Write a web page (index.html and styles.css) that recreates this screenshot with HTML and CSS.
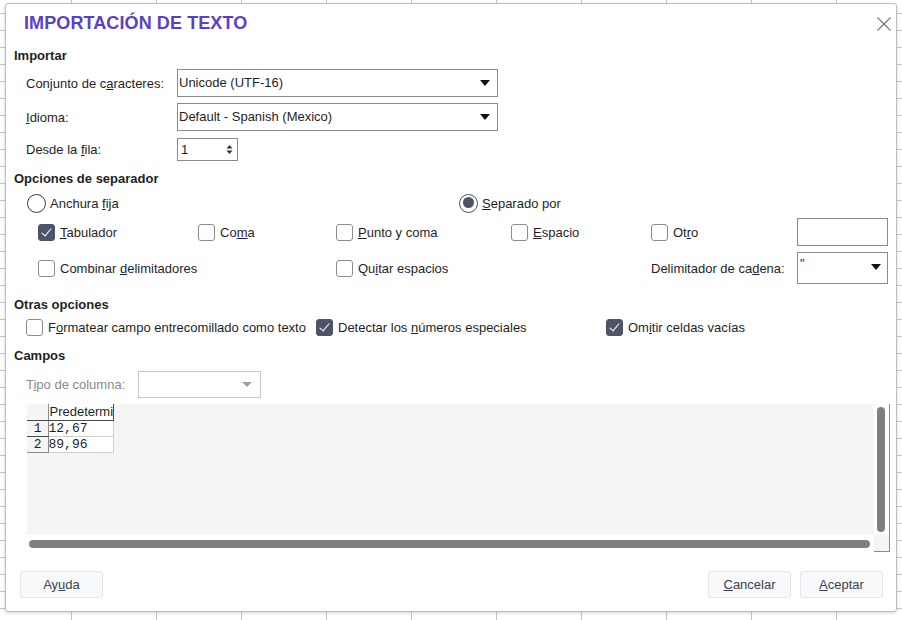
FILE: index.html
```html
<!DOCTYPE html>
<html lang="es">
<head>
<meta charset="utf-8">
<title>Importación de texto</title>
<link rel="stylesheet" href="styles.css">
</head>
<body>
<div class="dialog">
  <div class="titlebar">
    <h1 class="title">IMPORTACIÓN DE TEXTO</h1>
    <svg class="close" width="14" height="14" viewBox="0 0 14 14"><path d="M0.5 0.5 L13.5 13.5 M13.5 0.5 L0.5 13.5" stroke="#7a7a7a" stroke-width="1.2" fill="none"/></svg>
  </div>

  <div class="content">
    <div class="section h-importar">Importar</div>
    <div class="form-row r1">
      <span class="label">Conjunto de c<u>a</u>racteres:</span>
      <div class="combo wide"><span>Unicode (UTF-16)</span><i class="arrow"></i></div>
    </div>
    <div class="form-row r2">
      <span class="label"><u>I</u>dioma:</span>
      <div class="combo wide"><span>Default - Spanish (Mexico)</span><i class="arrow"></i></div>
    </div>
    <div class="form-row r3">
      <span class="label">Desde la <u>f</u>ila:</span>
      <div class="spin"><span>1</span>
        <svg class="spin-arrows" width="7" height="11" viewBox="0 0 7 11"><path d="M3.5 1 L6.5 4.5 L0.5 4.5 Z M3.5 10 L6.5 6.5 L0.5 6.5 Z" fill="#333"/></svg>
      </div>
    </div>

    <div class="section h-sep">Opciones de separador</div>
    <div class="radio-row">
      <label class="opt r-fixed"><i class="radio"></i><span>Anchura <u>f</u>ija</span></label>
      <label class="opt r-sep"><i class="radio on"></i><span><u>S</u>eparado por</span></label>
    </div>
    <div class="sep-grid">
      <label class="opt row1"><i class="check on"></i><span><u>T</u>abulador</span></label>
      <label class="opt row1"><i class="check"></i><span>Co<u>m</u>a</span></label>
      <label class="opt row1"><i class="check"></i><span><u>P</u>unto y coma</span></label>
      <label class="opt row1"><i class="check"></i><span><u>E</u>spacio</span></label>
      <label class="opt row1"><i class="check"></i><span>Ot<u>r</u>o</span></label>
      <div class="textfield"></div>

      <label class="opt row2 span2"><i class="check"></i><span>Combinar <u>d</u>elimitadores</span></label>
      <label class="opt row2"><i class="check"></i><span>Qu<u>i</u>tar espacios</span></label>
      <span class="row2 empty"></span>
      <span class="label row2">Delimitador de ca<u>d</u>ena:</span>
      <div class="combo small"><span>"</span><i class="arrow"></i></div>
    </div>

    <div class="section h-otras">Otras opciones</div>
    <div class="other-row">
      <label class="opt"><i class="check"></i><span>F<u>o</u>rmatear campo entrecomillado como texto</span></label>
      <label class="opt"><i class="check on"></i><span>Detectar los <u>n</u>úmeros especiales</span></label>
      <label class="opt"><i class="check on"></i><span>Om<u>i</u>tir celdas vacías</span></label>
    </div>

    <div class="section h-campos">Campos</div>
    <div class="form-row r-tipo">
      <span class="label muted">T<u>i</u>po de columna:</span>
      <div class="combo disabled"><span></span><i class="arrow"></i></div>
    </div>

    <div class="preview">
      <div class="preview-body">
        <table class="grid">
          <tr class="hdr"><th class="rh"></th><th class="col">Predetermi</th></tr>
          <tr class="r-a"><td class="rh">1</td><td class="cell">12,67</td></tr>
          <tr class="r-b"><td class="rh">2</td><td class="cell">89,96</td></tr>
        </table>
      </div>
      <div class="vscroll"><div class="thumb"></div></div>
      <div class="hscroll"><div class="thumb"></div></div>
      <div class="corner"></div>
    </div>
  </div>

  <div class="buttons">
    <button class="btn">Ay<u>u</u>da</button>
    <div class="spacer"></div>
    <button class="btn"><u>C</u>ancelar</button>
    <button class="btn"><u>A</u>ceptar</button>
  </div>
</div>
</body>
</html>
```

FILE: styles.css
```css
* { box-sizing: border-box; }

html, body {
  margin: 0;
  padding: 0;
  width: 902px;
  height: 620px;
  overflow: hidden;
}

body {
  font-family: "Liberation Sans", Arial, sans-serif;
  font-size: 13px;
  color: #1f1f1f;
  background-color: #ffffff;
  background-image:
    linear-gradient(to right, #c4c4cc 1px, transparent 1px),
    linear-gradient(to bottom, #c4c4cc 1px, transparent 1px);
  background-size: 85px 100%, 100% 17px;
  background-position: 71px 0, 0 13px;
  padding: 3px 0 0 5px;
}

.dialog {
  width: 892px;
  height: 609px;
  background: #fff;
  border: 1px solid #bdbdc4;
  border-radius: 3px;
  box-shadow: 0 1px 3px rgba(0,0,0,0.18);
  display: flex;
  flex-direction: column;
}

.titlebar {
  height: 36px;
  display: flex;
  align-items: center;
  justify-content: space-between;
  padding: 0 5px 0 18px;
}

.title {
  margin: 0;
  font-size: 18px;
  font-weight: bold;
  color: #5a40c8;
  letter-spacing: 0.1px;
  position: relative;
  top: 1px;
}

.close { position: relative; top: 2px; }

.content {
  padding: 0 8px 0 8px;
  flex: 1;
}

.section {
  font-weight: bold;
  height: 22px;
  line-height: 22px;
}
.h-importar { margin-top: 5px; height: 21px; }
.h-sep { margin-top: 5px; height: 20px; line-height: 20px; }
.h-otras { margin-top: 4px; height: 20px; }
.h-campos { margin-top: 5px; height: 20px; }

.form-row {
  display: flex;
  align-items: center;
  padding-left: 12px;
}
.form-row .label { width: 151px; }
.r1 { height: 34px; }
.r2 { height: 34px; }
.r3 { height: 30px; }
.r-tipo { height: 32px; margin-top: 3px; }

.label.muted { color: #8a8a8a; }
.r-tipo .label { width: 112px; }

.combo {
  position: relative;
  height: 28px;
  border: 1px solid #8a8a8a;
  background: #fff;
  display: flex;
  align-items: flex-start;
  padding: 5px 0 0 1px;
}
.combo.wide { width: 321px; height: 28px; }
.combo.small { width: 91px; height: 32px; padding-top: 3px; padding-left: 2px; }
.combo.disabled { width: 123px; height: 27px; border-color: #c8c8c8; }

.arrow {
  position: absolute;
  right: 7px;
  top: 10px;
  width: 0;
  height: 0;
  border-left: 5px solid transparent;
  border-right: 5px solid transparent;
  border-top: 6px solid #111;
}
.combo.small .arrow { top: 11px; right: 6px; }
.combo.disabled .arrow { border-top-color: #a0a0a0; border-top-width: 5px; top: 10px; right: 8px; }

.spin {
  position: relative;
  width: 61px;
  height: 23px;
  border: 1px solid #8a8a8a;
  padding: 3px 0 0 3px;
}
.spin-arrows { position: absolute; right: 4px; top: 5px; }

.opt {
  display: flex;
  align-items: center;
  gap: 5px;
  white-space: nowrap;
}

.radio {
  display: inline-block;
  width: 19px;
  height: 19px;
  border-radius: 50%;
  border: 1px solid #3a3a3a;
  background: #fff;
  position: relative;
}
.radio.on { border-color: #4d5468; border-width: 1.5px; }
.radio.on::after {
  content: "";
  position: absolute;
  left: 2.5px; top: 2.5px;
  width: 11px; height: 11px;
  border-radius: 50%;
  background: #4d5468;
}

.radio-row {
  display: flex;
  height: 28px;
  align-items: center;
  padding-left: 13px;
}
.radio-row .opt { gap: 4px; }
.r-fixed { width: 432px; }

.check {
  display: inline-block;
  width: 17px;
  height: 17px;
  border: 1px solid #8c8c8c;
  border-radius: 3px;
  background: #fff;
  position: relative;
  flex: none;
}
.check.on { background: #4d5468; border-color: #4d5468; }
.check.on::after {
  content: "";
  position: absolute;
  left: 5px;
  top: 1px;
  width: 4px;
  height: 9px;
  border-right: 1.3px solid #fff;
  border-bottom: 1.3px solid #fff;
  transform: rotate(40deg);
}

.sep-grid {
  display: grid;
  grid-template-columns: 160px 138px 175px 140px 146px 91px;
  grid-template-rows: 28px 44px;
  align-items: center;
  padding-left: 24px;
  margin-top: 1px;
}
.span2 { grid-column: span 2; }
.sep-grid .label { white-space: nowrap; }
.textfield {
  width: 91px;
  height: 28px;
  border: 1px solid #8a8a8a;
}

.other-row {
  display: grid;
  grid-template-columns: 290px 290px 1fr;
  height: 26px;
  align-items: center;
  padding-left: 12px;
}

.preview {
  margin: 4px 0 0 13px;
  width: 863px;
  height: 148px;
  display: grid;
  grid-template-columns: 847px 16px;
  grid-template-rows: 131px 17px;
}
.preview-body {
  background: #f5f5f5;
  overflow: hidden;
}
.grid {
  border-collapse: collapse;
  font-size: 13px;
}
.grid th, .grid td {
  padding: 0;
  height: 16px;
  line-height: 15px;
  font-weight: normal;
  vertical-align: top;
}
.grid .rh {
  width: 21px;
  text-align: right;
  padding-right: 6px;
  font-family: "Liberation Mono", monospace;
  border-right: 1px solid #8a8a8a;
  border-bottom: 1px solid #8a8a8a;
}
.grid tr.hdr .rh { border-bottom: 1px solid #4a4a4a; }
.grid .col {
  width: 65px;
  max-width: 65px;
  overflow: hidden;
  white-space: nowrap;
  text-align: left;
  padding-left: 1px;
  background: #fff;
  border-right: 1px solid #4a4a4a;
  border-bottom: 1px solid #4a4a4a;
}
.grid .cell {
  font-family: "Liberation Mono", monospace;
  background: #fff;
  border-right: 1px solid #cfcfcf;
  border-bottom: 1px solid #cfcfcf;
  padding-left: 0;
}
.grid tr.r-a .rh { border-bottom-color: #4a4a4a; }

.vscroll {
  background: #fff;
  padding: 3px 0 0 3px;
  border-right: 1px solid #8a8a8a;
}
.vscroll .thumb {
  width: 8px;
  height: 125px;
  border-radius: 4px;
  background: #7f7f7f;
}
.hscroll {
  background: #fff;
  padding: 5px 0 0 2px;
}
.hscroll .thumb {
  width: 841px;
  height: 8px;
  border-radius: 4px;
  background: #7f7f7f;
}
.corner {
  background: #f5f5f5;
  border-right: 1px solid #8a8a8a;
  border-bottom: 1px solid #8a8a8a;
}

.buttons {
  display: flex;
  gap: 9px;
  padding: 0 13px 13px 14px;
  height: 57px;
  align-items: flex-end;
}
.spacer { flex: 1; }
.btn {
  width: 83px;
  height: 27px;
  font-family: "Liberation Sans", Arial, sans-serif;
  font-size: 13px;
  color: #3b3f52;
  background: #f8f9fa;
  border: 1px solid #e3e5e8;
  border-radius: 3px;
  padding: 0;
}
```
